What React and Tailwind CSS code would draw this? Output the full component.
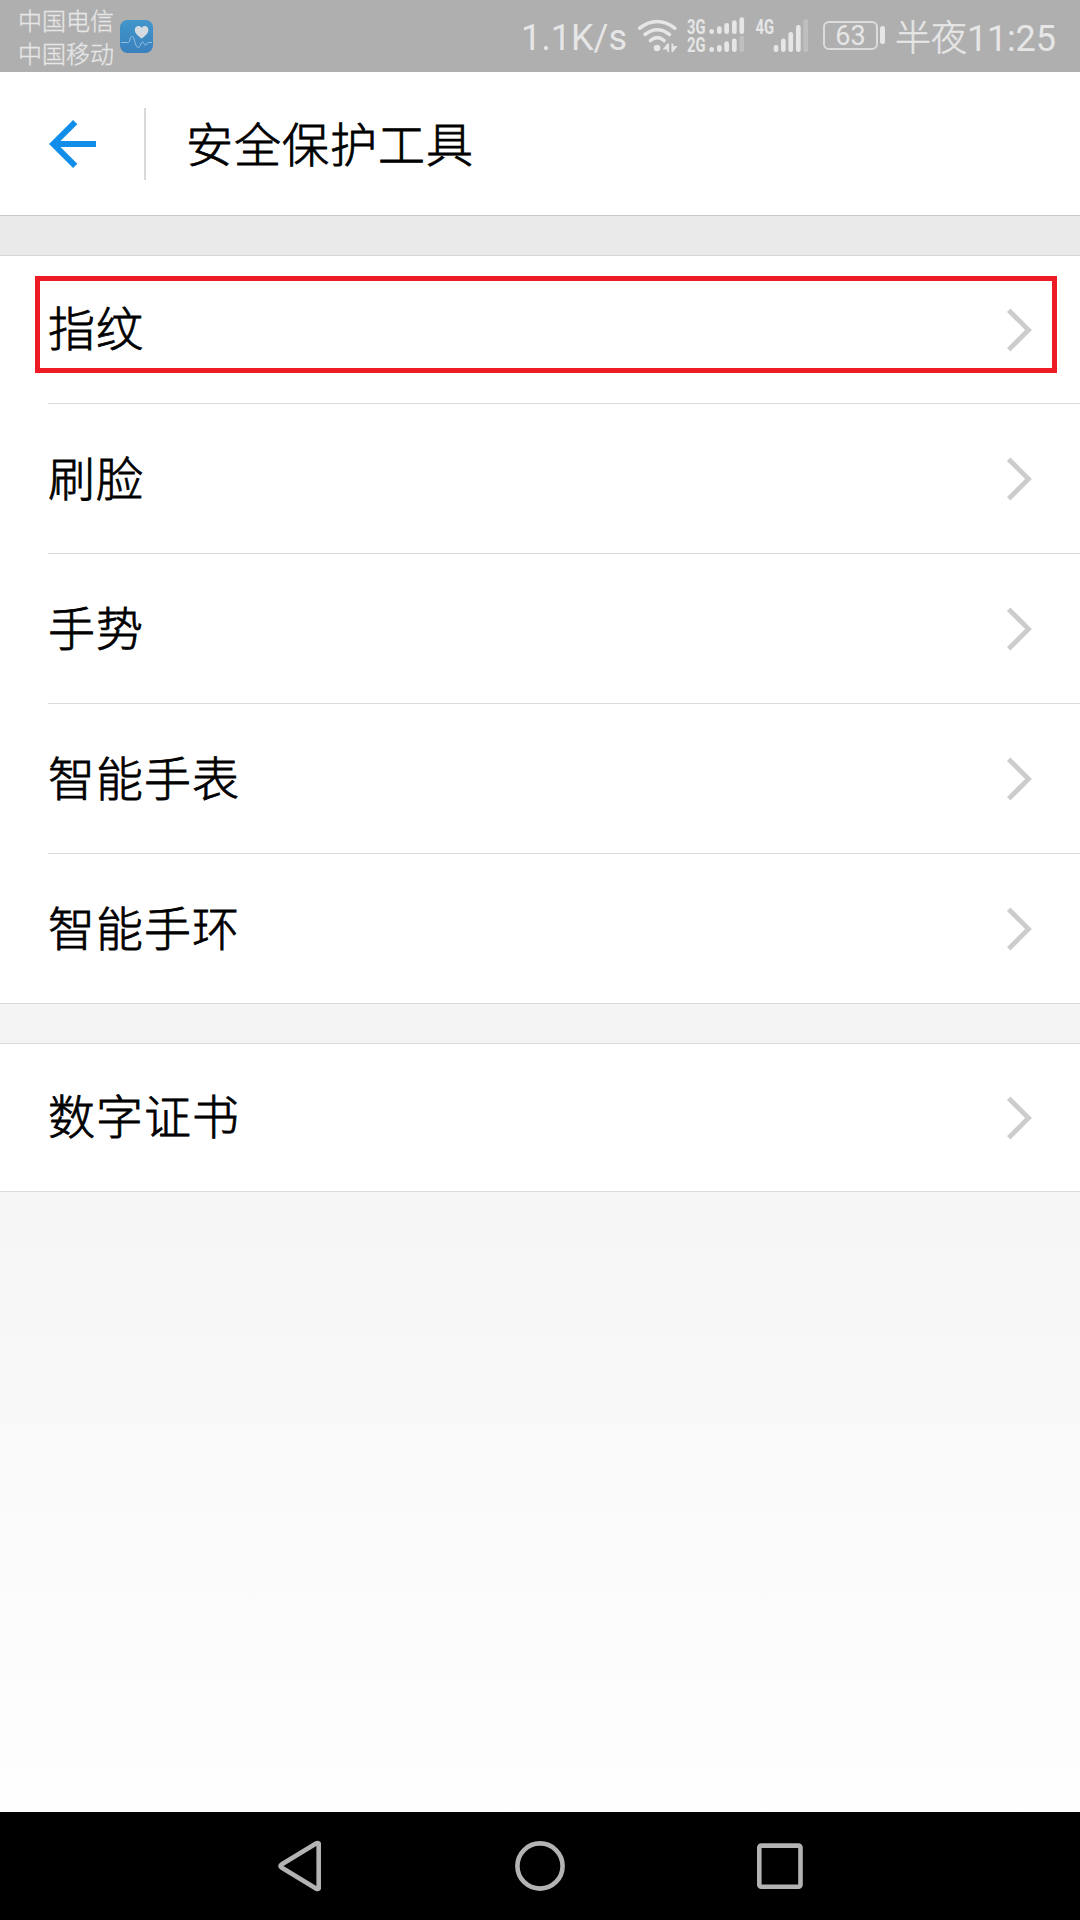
const groups = [
  ["指纹", "刷脸", "手势", "智能手表", "智能手环"],
  ["数字证书"],
];

const Bars = ({ bars, bottom }) =>
  bars.map(([x, top, dim]) => (
    <rect key={x} x={x} y={top} width="4.7" height={bottom - top} rx="2.3" fill={dim ? "#bfbfbf" : "#e6e6e6"} />
  ));

const HealthIcon = () => (
  <svg className="ml-[6px] mt-[20px] h-[33px] w-[33px]" viewBox="0 0 33 33">
    <defs>
      <linearGradient id="health" x1="0" y1="0" x2="0" y2="1">
        <stop offset="0" stopColor="#4196cb" />
        <stop offset="1" stopColor="#3a80bd" />
      </linearGradient>
    </defs>
    <rect width="33" height="33" rx="7.5" fill="url(#health)" />
    <path d="M21.7 18.6c-3-2.400-6.900-5-6.900-8.600 0-4.300 5.100-5.300 6.900-2 1.800-3.300 6.700-2.300 6.700 2 0 3.600-3.700 6.200-6.700 8.600z" fill="#d3dbe0" />
    <path d="M1 22.500h6.500c2 0 2-1.500 3-4.500 1-2.500 2.500-2.500 3.500 1 1.500 4.500 2 8.500 4.500 8.500 2.300 0 1.800-5.500 4-5.500 1.800 0 1.300 3.300 3 3.300 1.500 0 1-2.800 3-2.800h3.500" fill="none" stroke="#9cc5e0" strokeWidth="0.900" />
  </svg>
);

const WifiIcon = () => (
  <svg className="h-[72px] w-[41px]" viewBox="637 0 41 72" fill="none" stroke="#e6e6e6" strokeWidth="3.6" strokeLinecap="round">
    <path d="M639.600 28.200Q657.300 14.800 674.900 28.200" />
    <path d="M645 34.500Q657.300 25 669.500 34.500" />
    <path d="M650.500 40.500Q657.300 34.600 664 40.500" />
    <circle cx="657" cy="48" r="3.300" fill="#e6e6e6" stroke="none" />
    <path d="M662.500 49.500L667.500 43.500H669V52H667.300V49.500zM671.500 43.500H673.200V46H677.500L673 52H671.500z" fill="#e6e6e6" stroke="none" />
  </svg>
);

const SignalIcon = () => (
  <svg className="ml-[8px] h-[72px] w-[124px]" viewBox="686 0 124 72">
    <g fill="#e6e6e6" fontSize="21" fontWeight="700" fontFamily="Roboto, sans-serif">
      <text x="687" y="34" textLength="18.500" lengthAdjust="spacingAndGlyphs">3G</text>
      <text x="687" y="52" textLength="18.500" lengthAdjust="spacingAndGlyphs">2G</text>
      <text x="755.500" y="34" textLength="18.500" lengthAdjust="spacingAndGlyphs">4G</text>
    </g>
    <Bars bottom={34} bars={[[709.3, 29], [717, 26.3], [724.3, 23], [732, 20.3], [739.4, 17.2]]} />
    <Bars bottom={52} bars={[[709.3, 47], [717, 45], [724.3, 41.3], [732, 38.5], [739.4, 35.5, true]]} />
    <Bars bottom={52} bars={[[773.7, 45], [781, 38.5], [788.4, 32], [796, 25], [803.4, 19, true]]} />
  </svg>
);

const StatusBar = () => (
  <div className="flex h-[72px] bg-[#afafaf] text-[#e6e6e6]">
    <div className="ml-[18px] pt-[3px] text-[24px] leading-[33px] font-light [-webkit-text-stroke:0.3px]">
      <div>中国电信</div>
      <div>中国移动</div>
    </div>
    <HealthIcon />
    <div className="ml-auto mr-[24px] flex">
      <span className="mr-[8px] w-[108px] whitespace-nowrap font-[Roboto] text-[36px] leading-[76px]">1.1K/s</span>
      <WifiIcon />
      <SignalIcon />
      <div className="ml-[13px] mt-[21px] flex h-[29px] w-[55px] items-center justify-center rounded-[6px] border-2 border-[#dcdcdc] pt-[2px] font-[Roboto] text-[27px] leading-none">
        63
      </div>
      <div className="ml-[2px] mt-[26px] h-[18px] w-[5px] rounded-full bg-[#e6e6e6]" />
      <span className="ml-[10px] w-[161px] whitespace-nowrap text-[36px] leading-[70px]">
        <span className="font-light [-webkit-text-stroke:0.5px]">半夜</span>
        <span className="font-[Roboto] tracking-[-0.2px]">11:25</span>
      </span>
    </div>
  </div>
);

const Header = () => (
  <div className="flex h-[144px] items-center border-b border-[#c8c8c8] bg-white">
    <svg className="ml-[48px] h-[50px] w-[50px]" viewBox="48 119 50 50" fill="none" stroke="#108ee9" strokeWidth="6">
      <path d="M75.200 122.100L53.300 144L75.200 165.900M54 144H96" />
    </svg>
    <div className="ml-[46px] h-[72px] w-[2px] bg-[#d9d9d9]" />
    <h1 className="ml-[40px] pb-[4px] text-[47px] leading-none font-light tracking-[1px] [-webkit-text-stroke:0.8px]">安全保护工具</h1>
  </div>
);

const Row = ({ label, last, className }) => (
  <div className={`ml-[48px] flex items-center justify-between pr-[48px] ${last ? "" : "border-b border-[#dadada]"} ${className}`}>
    <span className="pb-[8px] text-[47px] leading-none font-light tracking-[1px] [-webkit-text-stroke:0.8px]">{label}</span>
    <svg className="h-[44px] w-[26px]" viewBox="0 0 26 44" fill="none" stroke="#ccc" strokeWidth="4.800">
      <path d="M2.700 2.200L22.500 22L2.700 41.800" />
    </svg>
  </div>
);

const NavBar = () => (
  <div className="flex h-[108px] items-center justify-center bg-black">
    <svg className="h-[108px] w-[540px]" viewBox="270 1812 540 108" fill="none" stroke="#b3b3b3" strokeWidth="4.600" strokeLinejoin="round">
      <path d="M318.700 1843.500V1888.500Q317.500 1889.500 316 1888.500L281.500 1867.500Q279.500 1866 281.500 1864.500L316 1843.500Q317.500 1842.500 318.700 1843.500z" />
      <circle cx="540" cy="1866" r="22.600" />
      <rect x="759.300" y="1845.600" width="41.200" height="41.200" rx="2" />
    </svg>
  </div>
);

export default function App() {
  return (
    <div className="flex h-[1920px] w-[1080px] flex-col overflow-hidden bg-white font-['Noto_Sans_CJK_SC',sans-serif] text-black">
      <StatusBar />
      <Header />
      <div className="h-[40px] border-b border-[#d6d6d6] bg-[#eaeaea]" />
      <div className="relative bg-white">
        {groups[0].map((label, i) => (
          <Row key={label} label={label} last={i === 4} className={i === 0 ? "h-[148px]" : i === 4 ? "h-[149px] pt-px" : "h-[150px] pt-px"} />
        ))}
        {/* highlight */}
        <div className="absolute left-[35px] top-[20px] h-[97px] w-[1022px] border-[5px] border-[#ed1c24]" />
      </div>
      <div className="h-[41px] border-y border-[#dadada] bg-[#f4f4f4]" />
      <div className="border-b border-[#dadada] bg-white">
        {groups[1].map((label) => (
          <Row key={label} label={label} last className="h-[147px]" />
        ))}
      </div>
      <div className="flex-1 bg-linear-to-b from-[#f6f6f6] to-[#fefefe]" />
      <NavBar />
    </div>
  );
}
